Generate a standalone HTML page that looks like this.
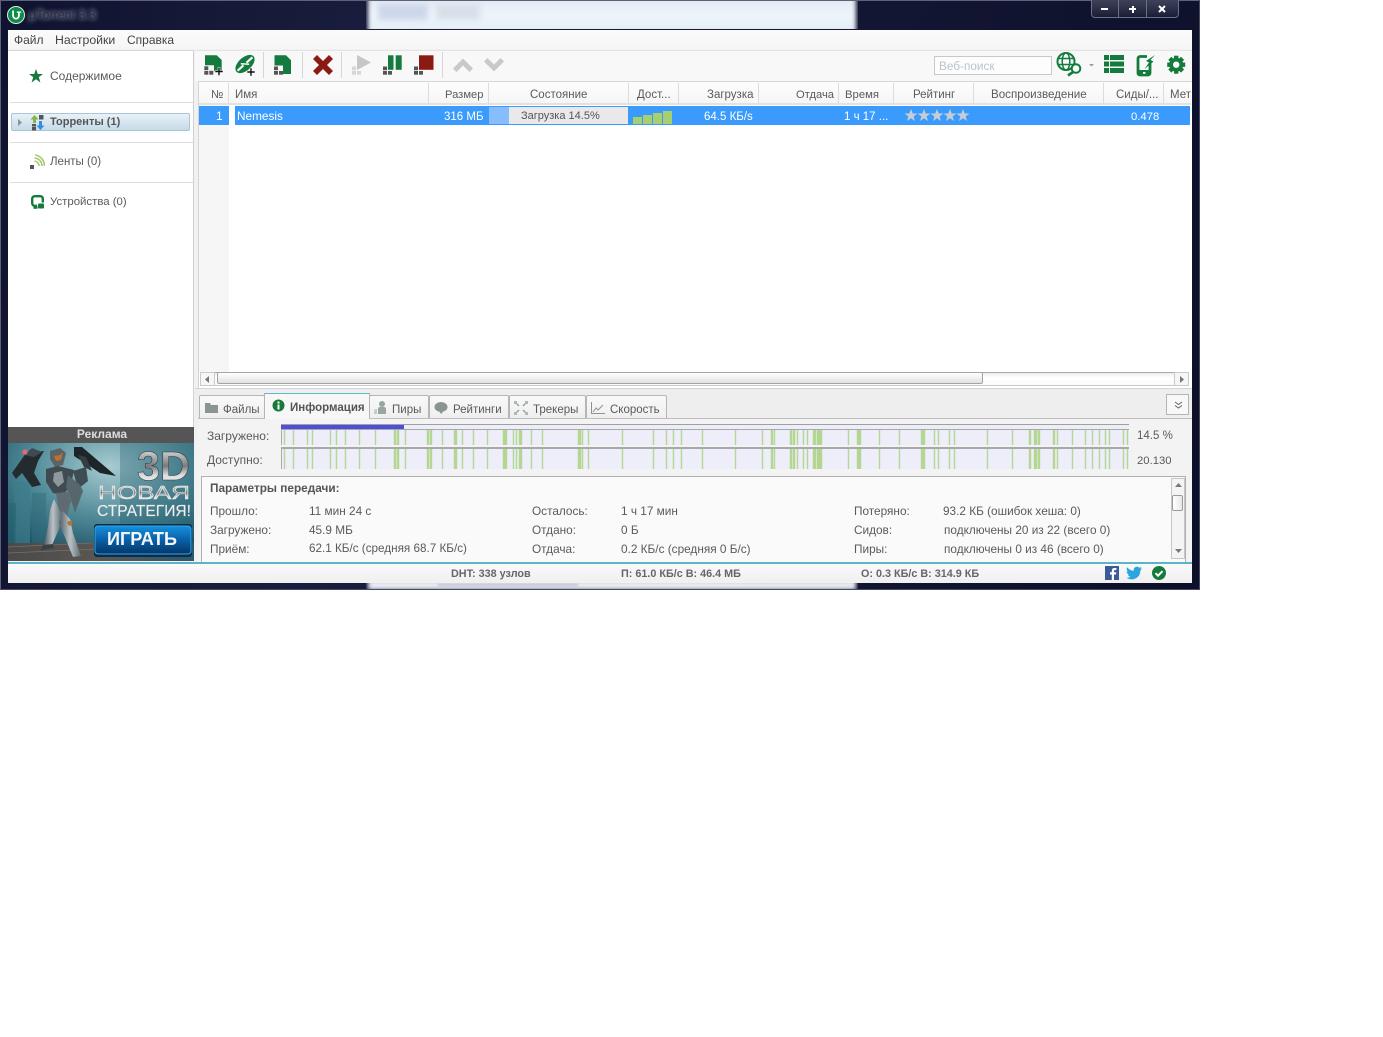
<!DOCTYPE html>
<html><head><meta charset="utf-8"><title>uTorrent</title>
<style>
html,body{margin:0;padding:0;background:#fff}
#p{position:relative;width:1383px;height:1037px;overflow:hidden;background:#fff;font-family:"Liberation Sans",sans-serif;font-size:11.5px;color:#5a5a5a}
#p div,#p span,#p svg{position:absolute}
.t{white-space:nowrap;line-height:14px;margin-top:1px}
.i{font-size:11.8px}
.s{font-size:10.8px;font-weight:bold;color:#666}
.b{font-weight:bold}
.hs{width:1px;top:83px;height:21px;background:#dcdcdc}
.dv{left:10px;width:183px;height:1px;background:#dcdcdc}
.tab{top:395px;height:23px;background:linear-gradient(#f9f9f9,#efefef);border:1px solid #b5b5b5;border-bottom:0;border-radius:2px 2px 0 0;box-sizing:border-box}
</style></head><body><div id="p">

<!-- window frame -->
<div style="left:0;top:0;width:1200px;height:590px;background:linear-gradient(100deg,#10132f,#1a1d3d 30%,#0d1029);"></div>
<div style="left:0;top:0;width:1200px;height:1px;background:#5d6278"></div>
<div style="left:0;top:0;width:1px;height:590px;background:#5d6278"></div>
<div style="left:1199px;top:0;width:1px;height:590px;background:#444a66"></div>
<div style="left:0;top:589px;width:1200px;height:1px;background:#444a66"></div>
<div style="left:366px;top:1px;width:492px;height:28px;overflow:hidden">
  <div style="left:2px;top:-4px;width:488px;height:36px;background:linear-gradient(#e2e9f2,#eef5fb 50%,#e3edf5);filter:blur(2px)"></div>
  <div style="left:12px;top:3px;width:50px;height:16px;background:#ccd7ea;filter:blur(3px)"></div>
  <div style="left:70px;top:3px;width:44px;height:16px;background:#d8dfe9;filter:blur(3px)"></div>
</div>
<div style="left:366px;top:583px;width:492px;height:6px;overflow:hidden">
  <div style="left:2px;top:-3px;width:488px;height:10px;background:#e9ecf2;filter:blur(2px)"></div>
  <div style="left:72px;top:1px;width:140px;height:2px;background:#b9bec9;filter:blur(1px)"></div>
</div>

<!-- title -->
<svg style="left:7px;top:6px" width="18" height="18" viewBox="0 0 18 18"><circle cx="9" cy="9" r="8.500" fill="#0f8b4c" stroke="#dcefe4" stroke-width="1"/><path d="M5.200 4.500v5.200a3.800 3.800 0 0 0 7.600 0V6.800h1.400V5.500H9.800v1.300h1.200v2.900a2 2 0 0 1-4 0V4.500z" fill="#fff"/></svg>
<div class="t" style="left:29px;top:7px;font-size:12.500px;color:#2a2e44;text-shadow:0 0 4px #9095a5,0 0 6px #70758a">µTorrent 3.3</div>

<!-- caption buttons -->
<div style="left:1091px;top:0;width:88px;height:18px;background:linear-gradient(#3d4258,#1a1d38);border:1px solid #6b7084;border-top:0;border-radius:0 0 4px 4px;box-sizing:border-box"></div>
<div style="left:1118px;top:0;width:1px;height:17px;background:#6b7084"></div>
<div style="left:1146px;top:0;width:1px;height:17px;background:#6b7084"></div>
<div style="left:1101px;top:8px;width:7px;height:2px;background:#fff"></div>
<div style="left:1129px;top:8px;width:7px;height:2px;background:#fff"></div>
<div style="left:1131.500px;top:5.500px;width:2px;height:7px;background:#fff"></div>
<svg style="left:1158px;top:5px" width="8" height="8" viewBox="0 0 8 8"><path d="M1 1L7 7M7 1L1 7" stroke="#fff" stroke-width="2"/></svg>

<!-- client area -->
<div style="left:8px;top:30px;width:1184px;height:553px;background:#f1f1f1"></div>
<div style="left:8px;top:30px;width:1184px;height:19px;background:linear-gradient(#fbfbfb,#f6f6f6)"></div>
<div class="t" style="left:14px;top:32px;color:#444;font-size:12px">Файл</div>
<div class="t" style="left:55px;top:32px;color:#444;font-size:12.300px">Настройки</div>
<div class="t" style="left:127px;top:32px;color:#444;font-size:12px">Справка</div>

<!-- sidebar -->
<div style="left:8px;top:50px;width:186px;height:377px;background:#fff;border-top:1px solid #d6d6d6;border-right:1px solid #d0d0d0;box-sizing:border-box"></div>
<svg style="left:29px;top:69px" width="14" height="14" viewBox="0 0 14 14"><path d="M7 0l1.800 5H14l-4.200 3.100L11.400 13.500 7 10.300 2.600 13.500l1.600-5.400L0 5h5.200z" fill="#157a3b"/></svg>
<div class="t" style="left:50px;top:68px;font-size:12px">Содержимое</div>
<div class="dv" style="top:102px"></div>
<div style="left:11px;top:113px;width:179px;height:18px;background:linear-gradient(#e9f1f7,#c5dbe9);border:1px solid #a9c5d8;border-radius:2px;box-sizing:border-box"></div>
<svg style="left:18px;top:119px" width="5" height="7"><path d="M0 0l4 3.500L0 7z" fill="#8a9299"/></svg>
<svg style="left:30px;top:114px" width="15" height="17" viewBox="0 0 15 17"><path d="M4.500 1l4 4.500H6V9H3V5.500H.5z" fill="#86b548"/><path d="M10.500 16l-4-4.500H9V7h3v4.500h2.500z" fill="#2f8fe0"/><rect x="9" y="1" width="4.500" height="4.500" fill="#555"/><rect x="2" y="10" width="4" height="2.500" fill="#555"/><rect x="2" y="13" width="4" height="3.500" fill="#555"/></svg>
<div class="t b" style="left:50px;top:114px;font-size:11px;color:#555">Торренты (1)</div>
<div class="dv" style="top:142px"></div>
<svg style="left:30px;top:154px" width="15" height="15" viewBox="0 0 15 15"><rect x="0" y="11" width="4" height="4" fill="#555"/><path d="M4.500 7a5 5 0 0 1 4.500 5M4.500 4a8 8 0 0 1 7.500 8M5 1a11 11 0 0 1 9.500 11" fill="none" stroke="#a5c972" stroke-width="1.600"/></svg>
<div class="t" style="left:50px;top:154px;font-size:11.500px">Ленты (0)</div>
<div class="dv" style="top:182px"></div>
<svg style="left:31px;top:195px" width="14" height="15" viewBox="0 0 14 15"><rect x="1.200" y="1.200" width="10.600" height="9.600" rx="2.500" fill="#fff" stroke="#157a3b" stroke-width="2.400"/><rect x="6.500" y="8" width="7" height="6" rx="1.500" fill="#157a3b" stroke="#fff"/><rect x="2.500" y="11" width="4" height="2.800" fill="#157a3b"/></svg>
<div class="t" style="left:50px;top:194px;font-size:11.400px">Устройства (0)</div>

<!-- ad -->
<div class="t b" style="left:8px;top:426px;width:186px;height:16px;background:#555;color:#ddd;text-align:center;line-height:15px;font-size:12px;padding-left:2px;box-sizing:border-box">Реклама</div>
<svg style="left:8px;top:443px" width="186" height="118" viewBox="0 0 186 118">
<defs>
<radialGradient id="bg" cx=".55" cy=".2" r=".8"><stop offset="0" stop-color="#a8cbd1"/><stop offset=".5" stop-color="#568f9c"/><stop offset="1" stop-color="#184f62"/></radialGradient>
<linearGradient id="fl" x1="0" y1="0" x2="1" y2="0"><stop offset="0" stop-color="#4b4a4a"/><stop offset=".5" stop-color="#5a5653"/><stop offset="1" stop-color="#2a5a70"/></linearGradient>
<linearGradient id="btn" x1="0" y1="0" x2="0" y2="1"><stop offset="0" stop-color="#1590dc"/><stop offset=".5" stop-color="#0a5fa8"/><stop offset="1" stop-color="#053566"/></linearGradient>
<linearGradient id="me" x1="0" y1="0" x2="0" y2="1"><stop offset="0" stop-color="#ffffff"/><stop offset=".5" stop-color="#7a7a7a"/><stop offset=".7" stop-color="#dddddd"/><stop offset="1" stop-color="#f5f5f5"/></linearGradient>
<linearGradient id="leg" x1="0" y1="0" x2="1" y2="0"><stop offset="0" stop-color="#4f5c62"/><stop offset=".5" stop-color="#b9c3c7"/><stop offset="1" stop-color="#5d696e"/></linearGradient>
</defs>
<rect width="186" height="118" fill="url(#bg)"/>
<rect x="6" y="38" width="16" height="62" fill="#3d7d8c" opacity=".7"/>
<rect x="24" y="50" width="14" height="50" fill="#2f6d7d" opacity=".5"/>
<rect x="0" y="60" width="8" height="40" fill="#2a6675" opacity=".7"/>
<rect x="112" y="0" width="74" height="85" fill="#28606f" opacity=".35"/>
<path d="M0 100h186v18H0z" fill="url(#fl)"/>
<path d="M0 104L84 100M0 110l90-4" stroke="#7b6f66" stroke-width=".7"/>
<path d="M4 30L18 10 36 8 30 18 26 30 33 42 24 44 14 30 8 36z" fill="#232b2f"/>
<path d="M16 12L24 5 34 9 26 14z" fill="#3e4a4f"/>
<circle cx="17" cy="9" r="2.600" fill="#e36a70"/>
<path d="M66 4L74 4 108 33 92 30 80 22 66 13z" fill="#1d2528"/>
<path d="M70 12L78 14 84 28 76 24z" fill="#343e42"/>
<path d="M65 28L78 24 80 38 70 46z" fill="#3d4d53"/>
<path d="M42 8l10-3 6 5-3 12-8 2-5-8z" fill="#5c6366"/><path d="M46 13l6-1 3-3-2 8-5 1z" fill="#b8732f"/>
<path d="M38 26l12-3 16 4-3 15-8 10-10-2-7-11z" fill="#3f4b50"/>
<path d="M46 30l8-2 2 11-6 5-5-6z" fill="#8d989c"/>
<path d="M60 32l12 10 3 6-8 22-5-16-4-10z" fill="#56666c"/>
<path d="M48 50l12-1 3 9-4 14-8-4z" fill="#5f6b70"/>
<path d="M46 56l8 16-3 14-7 16-8 1 4-20 2-16z" fill="url(#leg)"/>
<path d="M35 102l10-1 1 4-13 2z" fill="#394044"/>
<path d="M55 68l7 8 3 14 8 23-8 1-9-22-5-12z" fill="url(#leg)"/>
<path d="M64 77l-5 2 2 4 3-1z" fill="#b8732f"/>
<rect x="86" y="81" width="98" height="33" rx="3" fill="#0b2c4c"/>
<rect x="87" y="83" width="96" height="28" rx="3" fill="url(#btn)" stroke="#32aaea"/>
<text x="182" y="37" text-anchor="end" font-family="Liberation Sans" font-size="41" fill="url(#me)" textLength="53" lengthAdjust="spacingAndGlyphs" stroke="#26343a" stroke-width=".5" font-weight="bold">3D</text>
<text x="182" y="56" text-anchor="end" font-family="Liberation Sans" font-size="18" fill="url(#me)" textLength="92" lengthAdjust="spacingAndGlyphs" stroke="#eee" stroke-width=".5">НОВАЯ</text>
<text x="183" y="73" text-anchor="end" font-family="Liberation Sans" font-size="15.500" fill="#f0f0f0" textLength="94" lengthAdjust="spacingAndGlyphs" stroke="#ddd" stroke-width=".2">СТРАТЕГИЯ!</text>
<text x="134" y="102" text-anchor="middle" font-family="Liberation Sans" font-weight="bold" font-size="18.500" fill="#f3f6f8" textLength="70" lengthAdjust="spacingAndGlyphs">ИГРАТЬ</text>
</svg>

<!-- toolbar -->
<div style="left:195px;top:50px;width:997px;height:31px;background:#f8f8f8;border-top:1px solid #e4e4e4;box-sizing:border-box"></div>
<svg style="left:195px;top:48px" width="320" height="34" viewBox="0 0 320 34">
<path d="M10 7.300h11.700l5 4.700v11.300H19v-6h-9z" fill="#137b3e"/><rect x="9.300" y="18.300" width="4" height="3.700" fill="#555"/><rect x="9.300" y="22.800" width="4" height="3.900" fill="#555"/><rect x="14.300" y="22.800" width="4" height="3.900" fill="#555"/><path d="M23 19.500h2v3h3v2h-3v3h-2v-3h-3v-2h3z" fill="#111" stroke="#f8f8f8" stroke-width=".6"/>
<g transform="rotate(-42 50 16)"><ellipse cx="50" cy="16" rx="11.500" ry="6.500" fill="#137b3e"/><path d="M40 16h8M52 16h8" stroke="#f8f8f8" stroke-width="2.200"/><path d="M47 13l6 6" stroke="#f8f8f8" stroke-width="1.500"/></g>
<path d="M55 20h2v3h3v2h-3v3h-2v-3h-3v-2h3z" fill="#111" stroke="#f8f8f8" stroke-width=".6"/>
<rect x="68" y="4" width="1" height="26" fill="#d6d6d6"/>
<path d="M79.500 7.300h11.500l5 5V26H88v-8.500h-8.500z" fill="#137b3e"/><rect x="79" y="18.500" width="4" height="3.700" fill="#555"/><rect x="79" y="23" width="4" height="3.700" fill="#555"/><rect x="84" y="23" width="4" height="3.700" fill="#555"/>
<rect x="107" y="4" width="1" height="26" fill="#d6d6d6"/>
<path d="M122 7l6 6 6-6 4 4-6 6 6 6-4 4-6-6-6 6-4-4 6-6-6-6z" fill="#8b1a12"/>
<rect x="146" y="4" width="1" height="26" fill="#d6d6d6"/>
<path d="M162 7l14 7.500L162 22z" fill="#c6c6c6"/><rect x="157" y="18.500" width="4" height="3.700" fill="#d6d6d6"/><rect x="157" y="23" width="4" height="3.700" fill="#d6d6d6"/><rect x="162" y="23" width="4" height="3.700" fill="#d6d6d6"/>
<rect x="193" y="7.300" width="5.500" height="14.500" fill="#137b3e"/><rect x="200.700" y="7.300" width="6" height="14.500" fill="#137b3e"/><rect x="188" y="18.500" width="4" height="3.700" fill="#555"/><rect x="188" y="23" width="4" height="3.700" fill="#555"/><rect x="193" y="23" width="4" height="3.700" fill="#555"/>
<rect x="224" y="7.300" width="14.500" height="14.500" fill="#8b1a12"/><rect x="219" y="18.500" width="4" height="3.700" fill="#555"/><rect x="219" y="23" width="4" height="3.700" fill="#555"/><rect x="224" y="23" width="4" height="3.700" fill="#555"/>
<rect x="247" y="4" width="1" height="26" fill="#d6d6d6"/>
<path d="M258 20.500l10-10 10 10-3.500 3.500-6.500-6.500-6.500 6.500z" fill="#c9c9c9"/>
<path d="M289 13.500l3.500-3.500 6.500 6.500 6.500-6.500 3.500 3.500-10 10z" fill="#c9c9c9"/>
</svg>

<div class="t" style="left:934px;top:55px;width:118px;height:19px;background:#fdfdfd;border:1px solid #c8c8c8;box-sizing:border-box;padding-left:4px;line-height:19px;color:#bac3cf;font-size:11.800px">Веб-поиск</div>
<svg style="left:1050px;top:48px" width="140" height="34" viewBox="0 0 140 34">
<circle cx="16" cy="13.500" r="8.500" fill="none" stroke="#137b3e" stroke-width="2"/><ellipse cx="16" cy="13.500" rx="3.800" ry="8.500" fill="none" stroke="#137b3e" stroke-width="1.500"/><path d="M8 10.500h16M8 16.500h16" stroke="#137b3e" stroke-width="1.500"/>
<circle cx="26" cy="20.500" r="4.300" fill="#f8f8f8" stroke="#137b3e" stroke-width="2"/><path d="M23 24l-5 3.500" stroke="#137b3e" stroke-width="2.600"/>
<path d="M39 16h5l-2.500 2.500z" fill="#999"/>
<rect x="54" y="7" width="5" height="5" fill="#137b3e"/><rect x="60" y="7" width="14" height="5" fill="#137b3e"/><rect x="54" y="13.500" width="5" height="5" fill="#137b3e"/><rect x="60" y="13.500" width="14" height="5" fill="#137b3e"/><rect x="54" y="20" width="5" height="5" fill="#137b3e"/><rect x="60" y="20" width="14" height="5" fill="#137b3e"/>
<path d="M97 8.500H90a2 2 0 0 0-2 2V25a2 2 0 0 0 2 2h8a2 2 0 0 0 2-2V15" fill="none" stroke="#137b3e" stroke-width="2.800"/><rect x="88" y="22" width="12" height="5" fill="#137b3e"/><rect x="93" y="24" width="2.500" height="1.800" fill="#f8f8f8"/><path d="M105 7l-9 6 3 1.500-4.500 6.500 9-7.500-3-1.500z" fill="#137b3e"/>
<g transform="translate(0 .7)"><g fill="#137b3e"><rect x="124" y="7" width="4.400" height="18"/><rect x="124" y="7" width="4.400" height="18" transform="rotate(45 126.200 16)"/><rect x="124" y="7" width="4.400" height="18" transform="rotate(90 126.200 16)"/><rect x="124" y="7" width="4.400" height="18" transform="rotate(135 126.200 16)"/><circle cx="126.200" cy="16" r="7"/></g><circle cx="126.200" cy="16" r="3.200" fill="#f8f8f8"/></g>
</svg>

<!-- list -->
<div style="left:198px;top:81px;width:994px;height:307px;background:#fff;border-left:1px solid #d4d4d4;border-top:1px solid #d4d4d4;box-sizing:border-box"></div>
<div style="left:199px;top:82px;width:992px;height:23px;background:linear-gradient(#fdfdfd,#f6f6f6);border-bottom:2px solid #e2e2e2;box-sizing:border-box"></div>
<div style="left:199px;top:105px;width:30px;height:267px;background:#f6f6f6"></div>
<div class="hs" style="left:228px"></div><div class="hs" style="left:428px"></div><div class="hs" style="left:488px"></div><div class="hs" style="left:628px"></div><div class="hs" style="left:678px"></div><div class="hs" style="left:758px"></div><div class="hs" style="left:838px"></div><div class="hs" style="left:893px"></div><div class="hs" style="left:973px"></div><div class="hs" style="left:1103px"></div><div class="hs" style="left:1163px"></div>
<div class="t" style="left:211px;top:87px">№</div>
<div class="t" style="left:235px;top:87px">Имя</div>
<div class="t" style="left:445px;top:87px;font-size:11.200px">Размер</div>
<div class="t" style="left:530px;top:87px">Состояние</div>
<div class="t" style="left:637px;top:87px">Дост...</div>
<div class="t" style="left:707px;top:87px">Загрузка</div>
<div class="t" style="left:796px;top:87px;font-size:11.200px">Отдача</div>
<div class="t" style="left:845px;top:87px;font-size:11.300px">Время</div>
<div class="t" style="left:913px;top:87px">Рейтинг</div>
<div class="t" style="left:991px;top:87px;font-size:11.600px">Воспроизведение</div>
<div class="t" style="left:1116px;top:87px">Сиды/...</div>
<div style="left:1164px;top:83px;width:27px;height:21px;overflow:hidden"><div class="t" style="left:6px;top:4px">Метки</div></div>

<!-- row -->
<div style="left:199px;top:106px;width:30px;height:19px;background:#3a9bfd"></div>
<div style="left:235px;top:106px;width:955px;height:19px;background:#3a9bfd"></div>
<div style="left:489px;top:107px;width:20px;height:17px;background:#85bdfd"></div>
<div style="left:509px;top:107px;width:119px;height:17px;background:#e9e9e9"></div>
<div class="t" style="left:216px;top:108px;color:#fff;font-size:12px">1</div>
<div class="t" style="left:237px;top:108px;color:#fff;font-size:11.800px">Nemesis</div>
<div class="t" style="left:444px;top:109px;color:#fff">316 МБ</div>
<div class="t" style="left:521px;top:108px;color:#555;font-size:11px">Загрузка 14.5%</div>
<div style="left:633px;top:117px;width:9px;height:7px;background:#a6d06f"></div>
<div style="left:643px;top:115px;width:9px;height:9px;background:#a6d06f"></div>
<div style="left:653px;top:113px;width:9px;height:11px;background:#a6d06f"></div>
<div style="left:663px;top:111px;width:9px;height:13px;background:#a6d06f"></div>
<div class="t" style="left:704px;top:109px;color:#fff">64.5 КБ/s</div>
<div class="t" style="left:844px;top:109px;color:#fff">1 ч 17 ...</div>
<svg style="left:904px;top:109px" width="66" height="13" viewBox="0 0 66 13"><g fill="#c9cdd3"><path d="M7 0l1.700 4.500H13.500L9.600 7.400 11 12 7 9.200 3 12 4.400 7.400 .5 4.500H5.300z"/><path transform="translate(13)" d="M7 0l1.700 4.500H13.500L9.600 7.400 11 12 7 9.200 3 12 4.400 7.400 .5 4.500H5.300z"/><path transform="translate(26)" d="M7 0l1.700 4.500H13.500L9.600 7.400 11 12 7 9.200 3 12 4.400 7.400 .5 4.500H5.300z"/><path transform="translate(39)" d="M7 0l1.700 4.500H13.500L9.600 7.400 11 12 7 9.200 3 12 4.400 7.400 .5 4.500H5.300z"/><path transform="translate(52)" d="M7 0l1.700 4.500H13.500L9.600 7.400 11 12 7 9.200 3 12 4.400 7.400 .5 4.500H5.300z"/></g></svg>
<div class="t" style="left:1131px;top:109px;color:#fff;font-size:11.300px">0.478</div>

<!-- h scrollbar -->
<div style="left:200px;top:372px;width:989px;height:14px;background:linear-gradient(#ececec,#fff 40%,#fafafa);border:1px solid #c9c9c9;border-top-color:#aaa;box-sizing:border-box"></div>
<div style="left:200px;top:372px;width:15px;height:14px;background:#f6f6f6;border:1px solid #c9c9c9;box-sizing:border-box"></div>
<div style="left:217px;top:372px;width:766px;height:12px;background:linear-gradient(#fff,#e2e2e2);border:1px solid #a4a4a4;border-radius:2px;box-sizing:border-box"></div>
<div style="left:1174px;top:372px;width:15px;height:14px;background:#f6f6f6;border:1px solid #c9c9c9;box-sizing:border-box"></div>
<svg style="left:205px;top:376px" width="5" height="7"><path d="M4 0L0 3.500 4 7z" fill="#777"/></svg>
<svg style="left:1180px;top:376px" width="5" height="7"><path d="M0 0l4 3.500L0 7z" fill="#777"/></svg>

<!-- tabs strip -->
<div style="left:195px;top:388px;width:997px;height:30px;background:#eeeeee;border-top:1px solid #d4d4d4;box-sizing:border-box"></div>
<div style="left:198px;top:418px;width:994px;height:1px;background:#bdbdbd"></div>
<div class="tab" style="left:199px;width:66px"></div>
<div class="tab" style="left:369px;width:60px"></div>
<div class="tab" style="left:429px;width:80px"></div>
<div class="tab" style="left:509px;width:77px"></div>
<div class="tab" style="left:586px;width:81px"></div>
<div style="left:264px;top:393px;width:106px;height:26px;background:#f7f7f7;border:1px solid #b5b5b5;border-top:1px solid #5fb8d0;border-bottom:0;box-sizing:border-box"></div>
<svg style="left:205px;top:402px" width="13" height="11"><path d="M0 1h5l1 2h7v8H0z" fill="#8a9590"/></svg>
<div class="t" style="left:223px;top:402px">Файлы</div>
<svg style="left:272px;top:399px" width="13" height="13" viewBox="0 0 13 13"><circle cx="6.500" cy="6.500" r="6" fill="#157a3b"/><rect x="5.500" y="2.500" width="2" height="2" fill="#fff"/><rect x="5.500" y="5.500" width="2" height="5" fill="#fff"/></svg>
<div class="t b" style="left:290px;top:400px;color:#555">Информация</div>
<svg style="left:374px;top:401px" width="13" height="13" viewBox="0 0 13 13"><circle cx="8" cy="3" r="3" fill="#98a5a0"/><path d="M4 13V8q0-2 2-2h4q2 0 2 2v5z" fill="#98a5a0"/><path d="M0 13v-3q0-2 3-2v5z" fill="#c3cac7"/></svg>
<div class="t" style="left:392px;top:402px">Пиры</div>
<svg style="left:434px;top:402px" width="14" height="12" viewBox="0 0 14 12"><ellipse cx="7" cy="5" rx="6.500" ry="5" fill="#8a9590"/><path d="M5 9l4 1-2 2z" fill="#8a9590"/></svg>
<div class="t" style="left:453px;top:402px">Рейтинги</div>
<svg style="left:514px;top:401px" width="14" height="14" viewBox="0 0 14 14"><path d="M1 1l4 4M13 1L9 5M1 13l4-4M13 13L9 9" stroke="#9aa3a0" stroke-width="1.500"/><path d="M0 0h3v3H0zM11 0h3v3h-3zM0 11h3v3H0zM11 11h3v3h-3z" fill="#b0b7b4"/></svg>
<div class="t" style="left:533px;top:402px">Трекеры</div>
<svg style="left:591px;top:402px" width="14" height="12" viewBox="0 0 14 12"><path d="M.5 0v11.500H14" fill="none" stroke="#8a9590"/><path d="M2 10l3-4 2 2 5-5" fill="none" stroke="#8a9590"/></svg>
<div class="t" style="left:610px;top:402px">Скорость</div>
<div style="left:1166px;top:394px;width:23px;height:21px;background:#f8f8f8;border:1px solid #b5b5b5;box-sizing:border-box"></div>
<svg style="left:1174px;top:401px" width="9" height="8"><path d="M1 1l3.500 2.500L8 1M1 4.500l3.500 2.500L8 4.500" fill="none" stroke="#666"/></svg>

<!-- info pane -->
<div style="left:198px;top:419px;width:994px;height:144px;background:#f3f3f3"></div>
<div class="t" style="left:207px;top:428px;font-size:12px">Загружено:</div>
<div class="t" style="left:207px;top:452px;font-size:12px">Доступно:</div>
<div class="t" style="left:1137px;top:428px">14.5 %</div>
<div class="t" style="left:1137px;top:453px;font-size:11.300px">20.130</div>

<svg style="left:281px;top:424px" width="849" height="46" viewBox="281 424 849 46" shape-rendering="crispEdges">
<rect x="281" y="424" width="848" height="45" fill="#eeeefb"/>
<g fill="#b3d68f" stroke="#b8d99a" stroke-width=".5" shape-rendering="auto">
<path d="M284 430h1v39h-1zM293 430h1v39h-1zM307 430h1v39h-1zM312 430h1v39h-1zM330 430h1v39h-1zM336 430h1v39h-1zM345 430h1v39h-1zM359 430h1v39h-1zM375 430h1v39h-1zM394 430h2v39h-2zM397 430h2v39h-2zM405 430h1v39h-1zM427 430h2v39h-2zM430 430h2v39h-2zM442 430h1v39h-1zM454 430h3v39h-3zM462 430h1v39h-1zM473 430h1v39h-1zM487 430h1v39h-1zM503 430h4v39h-4zM513 430h1v39h-1zM516 430h1v39h-1zM519 430h3v39h-3zM531 430h1v39h-1zM542 430h1v39h-1zM578 430h3v39h-3zM582 430h1v39h-1zM588 430h1v39h-1zM622 430h1v39h-1zM653 430h1v39h-1zM666 430h1v39h-1zM673 430h1v39h-1zM681 430h1v39h-1zM702 430h1v39h-1zM735 430h1v39h-1zM762 430h1v39h-1zM771 430h2v39h-2zM774 430h1v39h-1zM790 430h2v39h-2zM793 430h2v39h-2zM797 430h1v39h-1zM803 430h1v39h-1zM807 430h1v39h-1zM813 430h3v39h-3zM817 430h5v39h-5zM848 430h1v39h-1zM857 430h4v39h-4zM879 430h1v39h-1zM899 430h1v39h-1zM921 430h2v39h-2zM923 430h2v39h-2zM934 430h1v39h-1zM938 430h1v39h-1zM949 430h1v39h-1zM954 430h1v39h-1zM987 430h1v39h-1zM1012 430h1v39h-1zM1029 430h2v39h-2zM1034 430h3v39h-3zM1038 430h2v39h-2zM1053 430h2v39h-2zM1057 430h1v39h-1zM1072 430h1v39h-1zM1085 430h1v39h-1zM1092 430h1v39h-1zM1099 430h1v39h-1zM1105 430h1v39h-1zM1109 430h1v39h-1zM1123 430h1v39h-1zM1127 430h1v39h-1z"/>
</g>
<rect x="281" y="445" width="849" height="2" fill="#f3f3f3"/>
<rect x="281" y="469" width="849" height="1" fill="#f3f3f3"/>
<rect x="281" y="424" width="848" height="1" fill="#a0a0a0"/>
<rect x="281" y="425" width="123" height="4" fill="#4d4fd8"/>
<rect x="404" y="425" width="725" height="4" fill="#eeeefb"/>
<rect x="281" y="429" width="848" height="1" fill="#a8a8a8"/>
<rect x="281" y="447" width="848" height="2" fill="#a8a8a8"/>
<rect x="281" y="430" width="1" height="15" fill="#aaa"/><rect x="281" y="449" width="1" height="20" fill="#aaa"/>
</svg>

<!-- transfer panel -->
<div style="left:201px;top:476px;width:985px;height:86px;background:#fafafa;border:1px solid #b0b0b0;border-bottom:0;box-sizing:border-box"></div>
<div class="t b i" style="left:210px;top:480px;color:#555">Параметры передачи:</div>
<div class="t i" style="left:210px;top:503px">Прошло:</div>
<div class="t i" style="left:309px;top:503px">11 мин 24 с</div>
<div class="t i" style="left:532px;top:503px">Осталось:</div>
<div class="t i" style="left:621px;top:503px">1 ч 17 мин</div>
<div class="t i" style="left:854px;top:503px">Потеряно:</div>
<div class="t i" style="left:943px;top:503px">93.2 КБ (ошибок хеша: 0)</div>
<div class="t i" style="left:210px;top:522px">Загружено:</div>
<div class="t i" style="left:309px;top:522px">45.9 МБ</div>
<div class="t i" style="left:532px;top:522px">Отдано:</div>
<div class="t i" style="left:621px;top:522px">0 Б</div>
<div class="t i" style="left:854px;top:522px">Сидов:</div>
<div class="t i" style="left:944px;top:522px">подключены 20 из 22 (всего 0)</div>
<div class="t i" style="left:210px;top:541px">Приём:</div>
<div class="t i" style="left:309px;top:541px;font-size:11.700px">62.1 КБ/с (средняя 68.7 КБ/с)</div>
<div class="t i" style="left:532px;top:541px">Отдача:</div>
<div class="t i" style="left:621px;top:541px">0.2 КБ/с (средняя 0 Б/с)</div>
<div class="t i" style="left:854px;top:541px">Пиры:</div>
<div class="t i" style="left:944px;top:541px">подключены 0 из 46 (всего 0)</div>

<!-- v scrollbar -->
<div style="left:1171px;top:478px;width:14px;height:81px;background:#f4f4f4;border:1px solid #c6c6c6;box-sizing:border-box"></div>
<div style="left:1172px;top:495px;width:11px;height:16px;background:linear-gradient(90deg,#fff,#e8e8e8);border:1px solid #9a9a9a;border-radius:2px;box-sizing:border-box"></div>
<svg style="left:1175px;top:483px" width="7" height="5"><path d="M3.500 0L7 4H0z" fill="#777"/></svg>
<svg style="left:1175px;top:549px" width="7" height="5"><path d="M0 0h7L3.500 4z" fill="#777"/></svg>

<!-- status bar -->
<div style="left:8px;top:562px;width:1184px;height:2px;background:#5fb3c9"></div>
<div style="left:8px;top:564px;width:1184px;height:18px;background:linear-gradient(#fafafa,#f0f0f0)"></div>
<div class="t s" style="left:451px;top:566px">DHT: 338 узлов</div>
<div class="t s" style="left:621px;top:566px">П: 61.0 КБ/с В: 46.4 МБ</div>
<div class="t s" style="left:861px;top:566px">О: 0.3 КБ/с В: 314.9 КБ</div>
<svg style="left:1105px;top:566px" width="14" height="14" viewBox="0 0 14 14"><rect width="14" height="14" fill="#3a5a98"/><path d="M9 14V8.500h2l.3-2.200H9V5q0-1 1-1h1.400V2H9.500Q6.800 2 6.800 4.800v1.500H5v2.200h1.800V14z" fill="#fff"/></svg>
<svg style="left:1126px;top:566px" width="16" height="14" viewBox="0 0 16 14"><path d="M16 2.200q-.9.400-1.900.5 1-.6 1.400-1.800-1 .6-2.100.8A3.300 3.300 0 0 0 7.800 4.700Q3.800 4.500 1.100 1.200q-1.300 2.400 1 4.400-.7 0-1.500-.4 0 2.500 2.600 3.200-.7.200-1.500.1.700 2.100 3.100 2.300Q2.600 12 0 11.800 7 15.500 12.300 10.500q2.200-2.500 2-5.900.9-.7 1.700-2.400z" fill="#2aa5e0"/></svg>
<svg style="left:1152px;top:566px" width="14" height="14" viewBox="0 0 14 14"><circle cx="7" cy="7" r="7" fill="#157a3b"/><path d="M3.500 7.200l2.500 2.500 4.500-4.500" fill="none" stroke="#fff" stroke-width="2"/></svg>

</div></body></html>
